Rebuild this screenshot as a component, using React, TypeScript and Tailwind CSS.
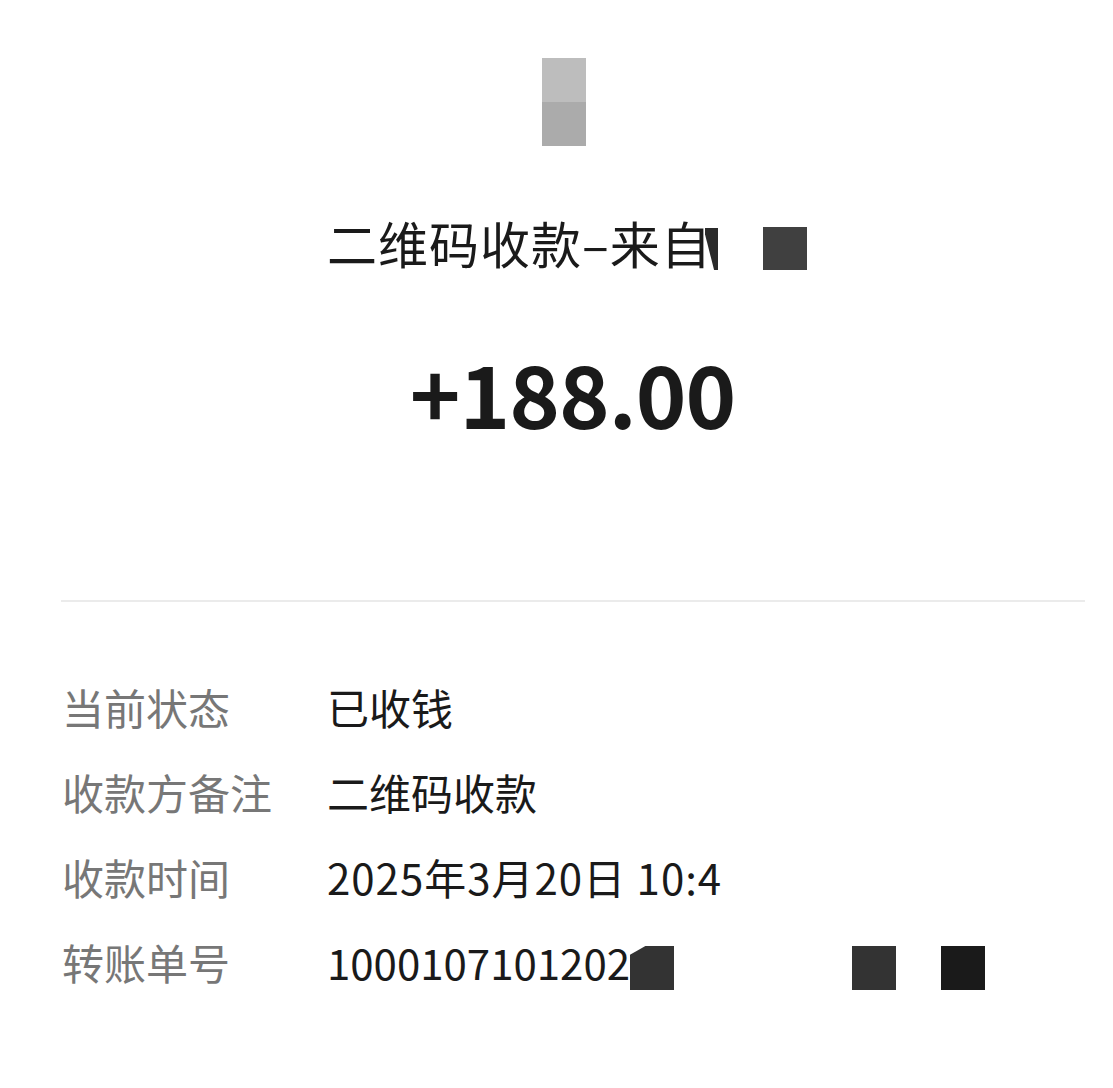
const FONT = '"Noto Sans CJK SC", "Noto Sans", sans-serif';

const ROWS: { label: string; value: string; masks?: boolean }[] = [
  { label: '当前状态', value: '已收钱' },
  { label: '收款方备注', value: '二维码收款' },
  { label: '收款时间', value: '2025年3月20日 10:4' },
  { label: '转账单号', value: '1000107101202', masks: true },
];

export default function App() {
  return (
    <div className="min-h-[1088px] bg-white text-[#1a1a1a]" style={{ fontFamily: FONT }}>
      {/* 头像 */}
      <div className="flex justify-center pt-[58px] pl-[14px]">
        <div className="w-[44px] h-[88px] flex flex-col">
          <div className="flex-1 bg-[#bdbdbd]" />
          <div className="flex-1 bg-[#ababab]" />
        </div>
      </div>

      {/* 标题 */}
      <div className="relative h-[60px] mt-[66px] pl-[327px]">
        <span className="text-[50px] leading-[60px] tracking-[1px]">二维码收款–来自</span>
        <div className="absolute left-[705px] top-[16px] w-[13px] h-[42px] bg-[#2a2a2a] [clip-path:polygon(0_0,100%_0,100%_100%,70%_100%,0_15%)]" />
        <div className="absolute left-[763px] top-[15px] w-[44px] h-[43px] bg-[#404040]" />
      </div>

      {/* 金额 */}
      <div className="flex justify-center mt-[70px] pl-[32px]">
        <span className="text-[86px] leading-[100px] font-bold tracking-[-1px]">+188.00</span>
      </div>

      {/* 分割线 */}
      <div className="ml-[61px] mr-[28px] mt-[158px] h-[2px] bg-[#ebebeb]" />

      {/* 明细 */}
      <div className="pl-[62px] pt-[62px] flex flex-col">
        {ROWS.map((row) => (
          <div key={row.label} className="flex items-center h-[85px]">
            <span className="w-[265px] text-[42px] text-[#777777]">{row.label}</span>
            <div className="relative flex-1 h-full flex items-center">
              <span className={`text-[42px] text-[#1a1a1a] ${row.value.startsWith('2025') ? 'tracking-[1px]' : ''}`}>
                {row.value}
              </span>
              {row.masks && (
                <>
                  <div className="absolute left-[303px] top-[27px] w-[44px] h-[44px] bg-[#333333] [clip-path:polygon(35%_0,100%_0,100%_100%,0_100%,0_20%)]" />
                  <div className="absolute left-[525px] top-[27px] w-[44px] h-[44px] bg-[#333333]" />
                  <div className="absolute left-[614px] top-[27px] w-[44px] h-[44px] bg-[#1a1a1a]" />
                </>
              )}
            </div>
          </div>
        ))}
      </div>
    </div>
  );
}
